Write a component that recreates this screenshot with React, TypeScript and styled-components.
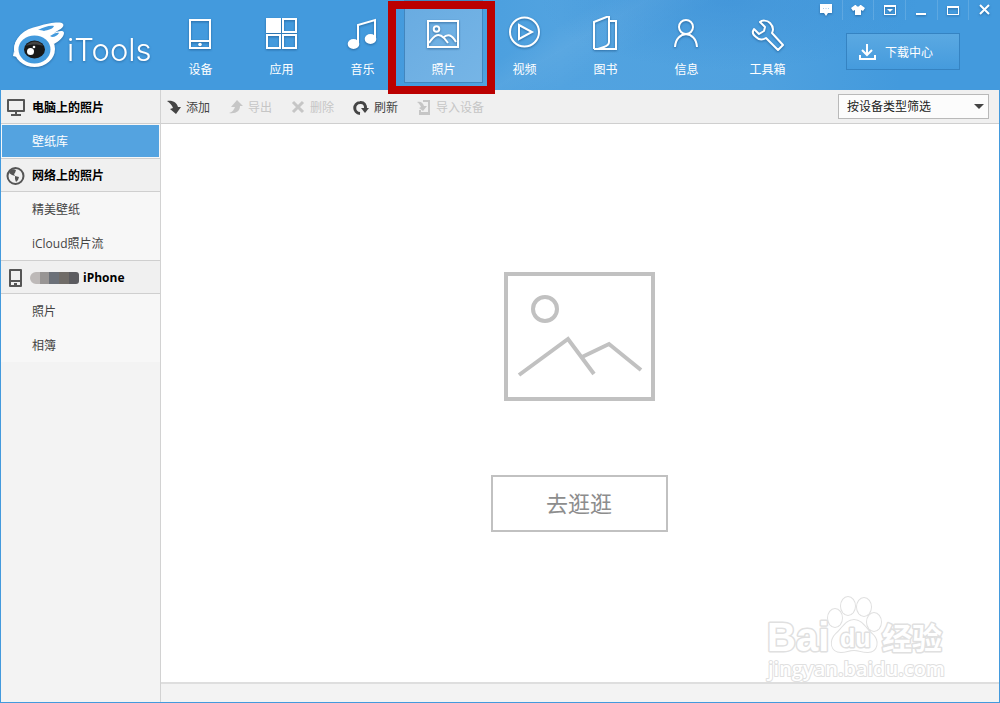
import React from "react";
import styled, { createGlobalStyle, css } from "styled-components";

const GlobalStyle = createGlobalStyle`
  * { box-sizing: border-box; }
  body {
    margin: 0;
    font-family: "Open Sans", "Noto Sans CJK SC", sans-serif;
    font-size: 12px;
    line-height: 16px;
    color: #333;
    background: #fff;
  }
  button, select { font: inherit; color: inherit; }
  button { padding: 0; border: 0; background: none; cursor: pointer; }
  ul { margin: 0; padding: 0; list-style: none; }
  svg { display: block; flex: none; }
`;

const Window = styled.div`
  display: flex;
  flex-direction: column;
  min-height: 100vh;
`;

const Header = styled.header`
  display: flex;
  height: 90px;
  color: #fff;
  background:
    radial-gradient(ellipse 190px 70px at 73% 0, rgba(50, 135, 210, 0.4), transparent),
    linear-gradient(150deg, transparent 52%, rgba(255, 255, 255, 0.05) 56%, transparent 62%),
    linear-gradient(90deg, #439add 0 38%, #52a3e0 56%, #4fa1df 76%, #439add 90%);
`;

const Brand = styled.div`
  display: flex;
  align-items: center;
  gap: 1px;
  flex: none;
  width: 160px;
  padding-left: 12px;
  filter: drop-shadow(0 1px 1px rgba(20, 70, 120, 0.5));
`;

const BrandName = styled.span`
  padding-top: 10px;
  font-family: Inter, sans-serif;
  font-weight: 300;
  font-size: 31px;
  line-height: 36px;
`;

const Nav = styled.nav`
  display: flex;
`;

const TabCell = styled.div`
  position: relative;
  width: 81px;
  padding: 0 1px;
`;

const Tab = styled.button<{ $active?: boolean }>`
  display: flex;
  flex-direction: column;
  align-items: center;
  gap: 10px;
  width: 100%;
  height: 83px;
  padding-top: 16px;
  svg { filter: drop-shadow(0 1px 1px rgba(15, 65, 115, 0.55)); }
  ${(p) =>
    p.$active &&
    css`
      background: linear-gradient(135deg, #68abe1, #76b5e6);
      box-shadow: inset 0 0 0 1px #4286be;
    `}
`;

const Highlight = styled.span`
  position: absolute;
  top: 1px;
  left: -15px;
  right: -11px;
  height: 93px;
  border: 8px solid #bb0000;
  pointer-events: none;
  z-index: 2;
`;

const HeaderEnd = styled.div`
  display: flex;
  flex-direction: column;
  align-items: flex-end;
  margin-left: auto;
`;

const WindowControls = styled.div`
  display: grid;
  grid-template-columns: repeat(6, 1fr);
  width: 190px;
  height: 20px;
`;

const Control = styled.button`
  display: flex;
  align-items: center;
  justify-content: center;
  border-left: 1px solid rgba(255, 255, 255, 0.14);
  svg { filter: drop-shadow(0 1px 1px rgba(15, 65, 115, 0.5)); }
  &:first-child { border-left: 0; }
`;

const Download = styled.button`
  display: flex;
  align-items: center;
  gap: 9px;
  width: 114px;
  height: 37px;
  margin: 13px 40px 0 0;
  padding: 2px 0 0 12px;
  border: 1px solid #3583c2;
  background: linear-gradient(#5ba9e2, #459bdd);
`;

const Body = styled.div`
  display: flex;
  flex: 1;
  border: 1px solid #439add;
  border-top: 0;
`;

const Sidebar = styled.aside`
  flex: none;
  width: 160px;
  border-right: 1px solid #d2d2d2;
  background: #f3f3f3;
`;

const SectionTitle = styled.h2`
  display: flex;
  align-items: center;
  gap: 7px;
  height: 34px;
  margin: 0;
  padding: 2px 0 0 5px;
  border-bottom: 1px solid #cfcfcf;
  background: #f0f0f0;
  font-size: 12px;
  font-weight: 700;
  color: #000;
  section + section & { border-top: 1px solid #cfcfcf; }
`;

const Items = styled.ul`
  background: #f7f7f7;
`;

const ItemLink = styled.a<{ $active?: boolean }>`
  display: flex;
  align-items: center;
  height: 34px;
  padding: 2px 0 0 31px;
  color: #444;
  text-decoration: none;
  ${(p) =>
    p.$active &&
    css`
      color: #fff;
      background: #54a3e0;
      border: 1px solid #f7f7f7;
      padding-left: 30px;
    `}
`;

const MaskedName = styled.span`
  width: 49px;
  height: 12px;
  margin: 0 -3px 0 -2px;
  border-radius: 6px 3px 3px 6px;
  background: linear-gradient(90deg, #bdb9b8 0 10px, #989594 10px 19px, #6b7078 19px 29px, #706c68 29px 39px, #5c5c60 39px);
`;

const Content = styled.div`
  display: flex;
  flex-direction: column;
  flex: 1;
  min-width: 0;
`;

const Toolbar = styled.div`
  display: flex;
  align-items: center;
  gap: 19px;
  height: 34px;
  padding: 0 10px 0 6px;
  border-bottom: 1px solid #cfcfcf;
  background: #f0f0f0;
`;

const Tool = styled.button`
  display: flex;
  align-items: center;
  gap: 5px;
  padding-top: 2px;
  color: #444;
  &:disabled { color: #c6c6c6; cursor: default; }
`;

const Filter = styled.label`
  display: grid;
  align-items: center;
  width: 151px;
  margin-left: auto;
  > * { grid-area: 1 / 1; }
  svg { justify-self: end; margin-right: 5px; pointer-events: none; }
`;

const FilterSelect = styled.select`
  width: 100%;
  height: 25px;
  padding: 0 8px;
  appearance: none;
  border: 1px solid #b9b9b9;
  border-radius: 0;
  background: #fcfcfc;
  color: #222;
`;

const Main = styled.main`
  position: relative;
  display: flex;
  flex: 1;
  flex-direction: column;
  align-items: center;
  justify-content: center;
  gap: 74px;
  padding: 0 2px 2px 0;
  background: #fff;
`;

const Browse = styled.button`
  width: 177px;
  height: 57px;
  padding-bottom: 2px;
  border: 2px solid #c1c1c1;
  font-size: 22px;
  line-height: 32px;
  color: #8d8d8d;
`;

const StatusBar = styled.footer`
  height: 20px;
  border-top: 2px solid #dedede;
  background: #f3f3f3;
`;

const Watermark = styled.svg`
  position: absolute;
  right: 49px;
  bottom: -3px;
  z-index: 1;
  pointer-events: none;
`;

const Logo = () => (
  <svg width="54" height="48" viewBox="0 0 54 48" aria-hidden="true">
    <path d="M2 30C2 17 11 8 27 5C37 2 49 0 51 3C53 6 47 9 42 12C46 10 52 9 52 12C52 16 46 21 42 23L35 15Z" fill="#fff" />
    <ellipse cx="22.500" cy="28" rx="20.500" ry="18" fill="#fff" />
    <path d="M2 30L1 35L5 36Z" fill="#fff" />
    <path d="M26 9C32 6 38 4 42 5C41 8 36 9 32 10C30 9 28 9 26 9Z" fill="#439add" />
    <path d="M38 15C42 12 46 11 47 12C46 14 43 16 40 16Z" fill="#439add" />
    <ellipse cx="22.500" cy="28.500" rx="16" ry="14" fill="#439add" />
    <ellipse cx="22.500" cy="28.500" rx="10.500" ry="9" fill="#181818" />
    <path d="M14 25C18 19 28 19 31 25C26 23 19 23 14 25Z" fill="#444" />
    <circle cx="18.500" cy="30.500" r="3.500" fill="#fff" />
    <circle cx="22" cy="26" r="1.300" fill="#fff" />
  </svg>
);

const NavIcon = ({ children }: { children: React.ReactNode }) => (
  <svg width="36" height="36" viewBox="0 0 36 36" fill="none" stroke="#fff" strokeWidth="2" aria-hidden="true">
    {children}
  </svg>
);

const tabs: { label: string; icon: React.ReactNode; active?: boolean }[] = [
  {
    label: "设备",
    icon: (
      <>
        <path d="M7 4H27V32H7ZM7 25H27" />
        <circle cx="17" cy="28.500" r="1.800" fill="#fff" stroke="none" />
      </>
    ),
  },
  {
    label: "应用",
    icon: (
      <>
        <path d="M2 2H17V17H2Z" fill="#fff" stroke="none" />
        <path d="M19 3H32V16H19ZM3 19H16V32H3ZM19 19H32V32H19Z" />
      </>
    ),
  },
  {
    label: "音乐",
    icon: (
      <>
        <path d="M13 28V9L30 4V23" />
        <ellipse cx="8.500" cy="28" rx="5.800" ry="5" fill="#fff" stroke="none" />
        <ellipse cx="25.500" cy="23" rx="5.800" ry="5" fill="#fff" stroke="none" />
      </>
    ),
  },
  {
    label: "照片",
    active: true,
    icon: (
      <>
        <path d="M2 5H32V31H2Z" />
        <circle cx="10.500" cy="13" r="2.800" />
        <path d="M3 27C9 18 13 17 18 22L22 27M17 22C22 17 26 19 30 26" />
      </>
    ),
  },
  {
    label: "视频",
    icon: (
      <>
        <circle cx="17.500" cy="16" r="14.500" />
        <path d="M12 9L25 16L12 23Z" />
      </>
    ),
  },
  {
    label: "图书",
    icon: (
      <path d="M6 33V6L21 0V26C21 28 19 30 16 31L10 33M22 5H28V33H6" />
    ),
  },
  {
    label: "信息",
    icon: (
      <>
        <circle cx="17" cy="11" r="7" />
        <path d="M6 31C7 14 27 14 28 31" />
      </>
    ),
  },
  {
    label: "工具箱",
    icon: (
      <path
        strokeLinejoin="round"
        d="M4 13L9 18L14 15L15 11L10 6C12 4 17 4 20 7C23 10 24 13 22 17L33 29L28 34L16 22C13 24 9 24 6 21C3 19 2 16 4 13Z"
      />
    ),
  },
];

const controls: { label: string; icon: React.ReactNode }[] = [
  {
    label: "反馈",
    icon: (
      <>
        <path d="M1 1H13V10H9L7 13L5 10H1Z" fill="#fff" />
        <path d="M4 5.500H10" stroke="#a8cdec" strokeDasharray="1 1.500" />
      </>
    ),
  },
  {
    label: "皮肤",
    icon: <path d="M4 2H5C6 4 8 4 9 2H10L14 5L12 8L10 7V12H4V7L2 8L0 5Z" fill="#fff" />,
  },
  {
    label: "菜单",
    icon: (
      <>
        <path d="M1 2H13V12H1ZM2 4V11H12V4Z" fill="#fff" fillRule="evenodd" />
        <path d="M4 6H10L7 9Z" fill="#fff" />
      </>
    ),
  },
  { label: "最小化", icon: <path d="M2 10H12V12H2Z" fill="#fff" /> },
  { label: "最大化", icon: <path d="M1 3H13V12H1ZM2 5V11H12V5Z" fill="#fff" fillRule="evenodd" /> },
  { label: "关闭", icon: <path d="M2 2L11 11M11 2L2 11" stroke="#fff" strokeWidth="2" /> },
];

const arrowShape = "M0 1C6 0 10 3 11 7H14L9 14L3 9L6 8C5 5 3 3 0 1Z";

const tools: { label: string; width: number; disabled?: boolean; icon: React.ReactNode }[] = [
  { label: "添加", width: 14, icon: <path d={arrowShape} fill="currentColor" /> },
  {
    label: "导出",
    width: 14,
    disabled: true,
    icon: <path d="M8 0L14 6H11C11 11 7 14 0 13C4 12 5 9 6 7H2Z" fill="currentColor" />,
  },
  {
    label: "删除",
    width: 14,
    disabled: true,
    icon: <path d="M2 2L12 12M12 2L2 12" stroke="currentColor" strokeWidth="3" />,
  },
  {
    label: "刷新",
    width: 16,
    icon: (
      <>
        <path d="M7 13.500C0 13 0 3 7 2.500C11 2 13 5 12.500 9" fill="none" stroke="currentColor" strokeWidth="3" />
        <path d="M8 8H16L12 13Z" fill="currentColor" />
      </>
    ),
  },
  {
    label: "导入设备",
    width: 14,
    disabled: true,
    icon: (
      <>
        <path d="M6 1H12V14H3V10M3 13H12" fill="none" stroke="currentColor" strokeWidth="2" />
        <path d="M0 2C4 1 6 3 7 6H10L6 11L2 8L4 7C3 5 2 3 0 2Z" fill="currentColor" />
      </>
    ),
  },
];

const sections: { title: string; masked?: boolean; icon: React.ReactNode; items: { label: string; active?: boolean }[] }[] = [
  {
    title: "电脑上的照片",
    icon: <path d="M2 2H18V13H2ZM10 13V17M5 17H15" />,
    items: [{ label: "壁纸库", active: true }],
  },
  {
    title: "网络上的照片",
    icon: (
      <>
        <circle cx="9.500" cy="9" r="8" />
        <path d="M4 4C6 2 8 2 10 3L9 6L8 7L9 9L6 8L3 6ZM9 9L13 10L12 13L10 15L9 12Z" fill="#555" stroke="none" />
      </>
    ),
    items: [{ label: "精美壁纸" }, { label: "iCloud照片流" }],
  },
  {
    title: "iPhone",
    masked: true,
    icon: <path d="M4 1H15V17H4ZM4 12H15M8 15H11" />,
    items: [{ label: "照片" }, { label: "相簿" }],
  },
];

export default function App() {
  return (
    <Window>
      <GlobalStyle />
      <Header>
        <Brand>
          <Logo />
          <BrandName>iTools</BrandName>
        </Brand>
        <Nav>
          {tabs.map((t) => (
            <TabCell key={t.label}>
              <Tab $active={t.active}>
                <NavIcon>{t.icon}</NavIcon>
                {t.label}
              </Tab>
              {t.active && <Highlight />}
            </TabCell>
          ))}
        </Nav>
        <HeaderEnd>
          <WindowControls>
            {controls.map((c) => (
              <Control key={c.label} aria-label={c.label}>
                <svg width="14" height="14" viewBox="0 0 14 14" aria-hidden="true">
                  {c.icon}
                </svg>
              </Control>
            ))}
          </WindowControls>
          <Download>
            <svg width="17" height="18" viewBox="0 0 17 18" fill="none" stroke="#fff" strokeWidth="2" aria-hidden="true">
              <path d="M8 0V11M3 6L8 11L13 6M1 11V15H16V11" />
            </svg>
            下载中心
          </Download>
        </HeaderEnd>
      </Header>
      <Body>
        <Sidebar>
          {sections.map((s) => (
            <section key={s.title}>
              <SectionTitle>
                <svg
                  width="19"
                  height="19"
                  viewBox="0 0 19 19"
                  fill="none"
                  stroke="#555"
                  strokeWidth="2"
                  strokeLinejoin="round"
                  aria-hidden="true"
                >
                  {s.icon}
                </svg>
                {s.masked && <MaskedName />}
                {s.title}
              </SectionTitle>
              <Items>
                {s.items.map((i) => (
                  <li key={i.label}>
                    <ItemLink href="#" $active={i.active}>
                      {i.label}
                    </ItemLink>
                  </li>
                ))}
              </Items>
            </section>
          ))}
        </Sidebar>
        <Content>
          <Toolbar>
            {tools.map((t) => (
              <Tool key={t.label} disabled={t.disabled}>
                <svg width={t.width} height="16" viewBox={`0 0 ${t.width} 16`} aria-hidden="true">
                  {t.icon}
                </svg>
                {t.label}
              </Tool>
            ))}
            <Filter>
              <FilterSelect aria-label="按设备类型筛选">
                <option>按设备类型筛选</option>
              </FilterSelect>
              <svg width="10" height="6" viewBox="0 0 10 6" aria-hidden="true">
                <path d="M0 0H10L5 5Z" fill="#444" />
              </svg>
            </Filter>
          </Toolbar>
          <Main>
            <svg width="151" height="129" viewBox="0 0 151 129" fill="none" stroke="#c1c1c1" strokeWidth="4" aria-hidden="true">
              <path d="M2 2H149V127H2Z" />
              <circle cx="41" cy="37" r="12" />
              <path d="M15 103L64 67L90 102M78 85L105 72L137 98" />
            </svg>
            <Browse>去逛逛</Browse>
            <Watermark
              width="185"
              height="95"
              viewBox="0 0 185 95"
              fill="#fff"
              stroke="#e0e0e0"
              strokeWidth="3"
              strokeLinejoin="round"
              paintOrder="stroke"
            >
              <g strokeWidth="2">
                <ellipse cx="70" cy="28" rx="7" ry="9" />
                <ellipse cx="83" cy="16" rx="7" ry="9" />
                <ellipse cx="99" cy="17" rx="7" ry="9" />
                <ellipse cx="109" cy="32" rx="7" ry="9" />
                <path d="M89 30C97 30 101 39 107 44C115 51 112 62 103 62C97 62 93 60 89 60C84 60 81 62 76 62C66 62 64 51 71 44C77 39 81 30 89 30Z" />
              </g>
              <text x="2" y="61" fontSize="40" fontWeight="700" fontFamily='"Liberation Sans", sans-serif'>Bai</text>
              <text x="75" y="57" fontSize="25" fontWeight="700" fontFamily='"Liberation Sans", sans-serif'>du</text>
              <text x="117" y="59" fontSize="30" fontWeight="700" fontFamily='"Noto Sans CJK SC", sans-serif'>经验</text>
              <text x="3" y="86" fontSize="20" fontWeight="600" strokeWidth="2" fontFamily='"Open Sans", sans-serif'>jingyan.baidu.com</text>
            </Watermark>
          </Main>
          <StatusBar />
        </Content>
      </Body>
    </Window>
  );
}
